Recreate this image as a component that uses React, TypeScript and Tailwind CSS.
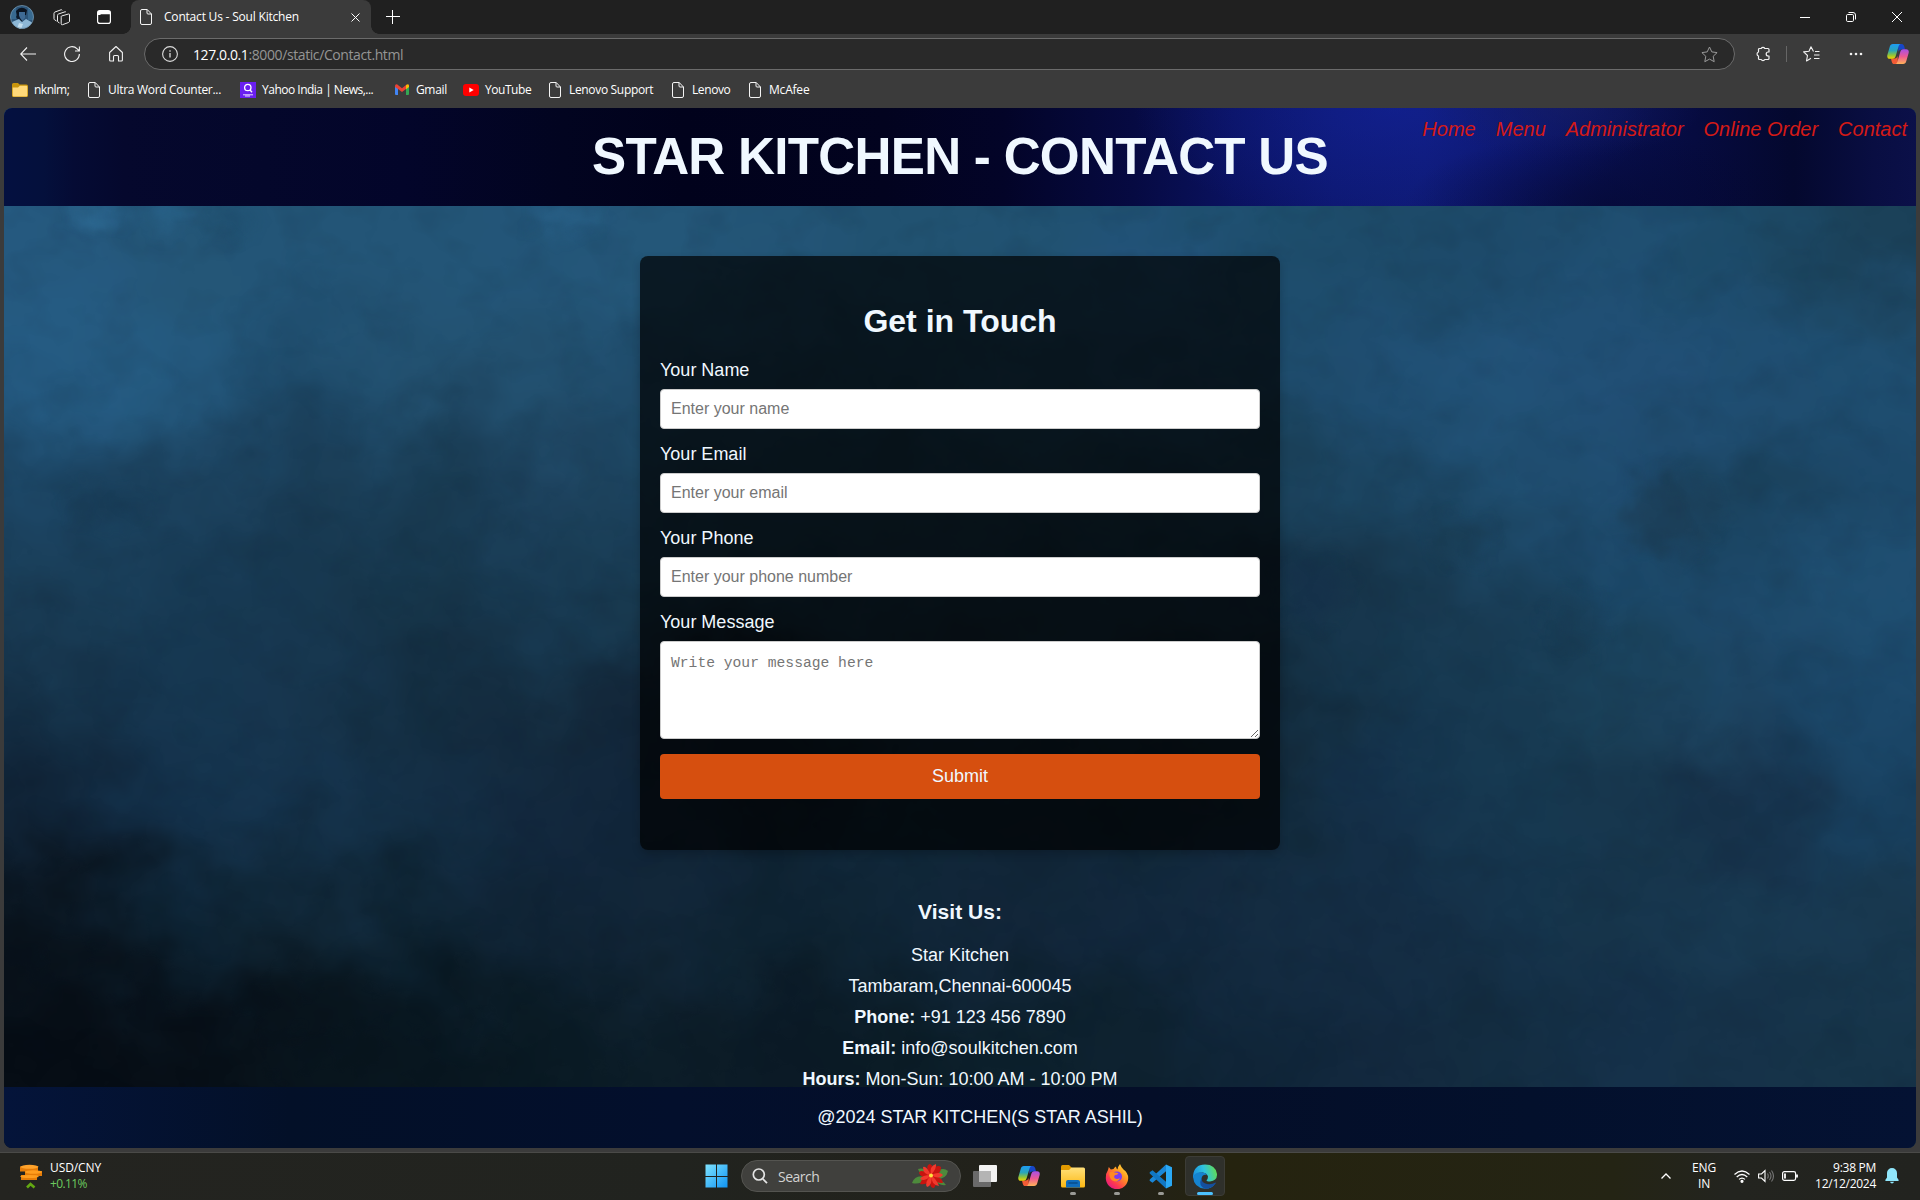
import type { ReactNode } from "react";

const ui = "font-['Open_Sans','Noto_Sans',sans-serif]";

function DocIcon() {
  return (
    <svg width="12" height="16" viewBox="0 0 12 16" fill="none" stroke="#f4f4f4" className="shrink-0">
      <path d="M2 .5h5.2L11.5 5v9a1.5 1.5 0 0 1-1.5 1.5H2A1.5 1.5 0 0 1 .5 14V2A1.500 1.500 0 0 1 2 .5ZM7 .5V4a1 1 0 0 0 1 1h3.500" />
    </svg>
  );
}

function Copilot({ size, id }: { size: number; id: string }) {
  return (
    <svg width={size} height={size} viewBox="0 0 24 24">
      <defs>
        <linearGradient id={id + "a"} x1="0" y1="0" x2="0" y2="1">
          <stop offset="0" stopColor="#1d9bf5" />
          <stop offset=".45" stopColor="#2aa6b8" />
          <stop offset=".75" stopColor="#8fc43a" />
          <stop offset="1" stopColor="#f7d400" />
        </linearGradient>
        <linearGradient id={id + "b"} x1="0" y1="0" x2="0" y2="1">
          <stop offset="0" stopColor="#a64fe8" />
          <stop offset=".5" stopColor="#ee5a92" />
          <stop offset="1" stopColor="#ffb357" />
        </linearGradient>
      </defs>
      <path d="M12 1h4c1.700 0 2.300 1 2.800 2.600L19.700 7h-4c-2 0-2.600 1-3.200 3z" fill="#1746c8" />
      <path d="M12 23H8c-1.700 0-2.300-1-2.800-2.600L4.300 17h4c2 0 2.600-1 3.200-3z" fill="#f25b35" />
      <path d="M6.500 1H15c-1.400.3-2 1.400-2.500 3.100L9.600 14c-.6 2-1.500 3.300-3.600 3.300H3.200C.8 17.300-.2 15.500.4 13.200L3 4C3.600 2 4.500 1 6.500 1Z" fill={`url(#${id}a)`} />
      <path d="M17.500 23H9c1.400-.3 2-1.400 2.500-3.100L14.400 10c.6-2 1.500-3.300 3.600-3.300h2.800c2.400 0 3.400 1.800 2.800 4.100L21 20c-.6 2-1.500 3-3.500 3Z" fill={`url(#${id}b)`} />
    </svg>
  );
}

function TitleBar() {
  return (
    <div className="flex h-[34px] items-center bg-[#202020]">
      <div className="flex w-[131px] items-center pl-[10px]">
        <svg width="24" height="24" viewBox="0 0 24 24">
          <defs>
            <clipPath id="av"><circle cx="12" cy="12" r="11.500" /></clipPath>
          </defs>
          <g clipPath="url(#av)">
            <rect width="24" height="24" fill="#2c5478" />
            <path d="M0 0h6v14H0zM18 3h6v12h-6z" fill="#386a90" />
            <path d="M6 6q5-6 11-1l-1 5-9 1z" fill="#0a1420" />
            <path d="M9 7h6v6l-3 3-3-4z" fill="#3f6b94" />
            <path d="M8 8l2 5 3 4-4-1-3-4z" fill="#0c1a2a" />
            <path d="M2 17l7-3 3 3 4-3 7 4v6H2z" fill="#8db7d6" />
            <path d="M9 18l4 1-2 5H7z" fill="#c2ddee" />
          </g>
          <circle cx="12" cy="12" r="11.500" fill="none" stroke="#7396ad" strokeWidth=".8" />
        </svg>
        <svg width="17" height="17" viewBox="0 0 17 17" fill="none" stroke="#ececec" strokeLinejoin="round" className="ml-[19px] shrink-0">
          <path d="M8.500 7 15.500 5a.8.8 0 0 1 1 .8v6.400a1.500 1.500 0 0 1-1 1.300l-6 2.200a1 1 0 0 1-1.300-.9V8.200A1.300 1.300 0 0 1 8.500 7Z" />
          <path d="M6.500 14 5 13a1.200 1.200 0 0 1-.5-1V6.500A1.500 1.500 0 0 1 5.500 5L12 2.800a1 1 0 0 1 1 .3M3.500 12 1.500 10.700A1.200 1.200 0 0 1 1 9.700V4.300A1.500 1.500 0 0 1 2 3L8 .8a1 1 0 0 1 1.200.5" />
        </svg>
        <svg width="14" height="14" viewBox="0 0 14 14" className="ml-[27px] shrink-0">
          <rect x=".6" y=".6" width="12.800" height="12.800" rx="2.200" fill="none" stroke="#fff" strokeWidth="1.200" />
          <path d="M1 1h12v3.200H1zM1 4h2.500v1H1z" fill="#fff" />
        </svg>
      </div>
      <div className="relative flex h-[34px] w-[240px] items-center rounded-t-[8px] bg-[#3b3b3b] pl-[9px]">
        <span className="absolute bottom-0 left-[-8px] size-[8px] bg-[radial-gradient(circle_at_0_0,#202020_7.500px,#3b3b3b_8px)]" />
        <span className="absolute bottom-0 right-[-8px] size-[8px] bg-[radial-gradient(circle_at_100%_0,#202020_7.500px,#3b3b3b_8px)]" />
        <DocIcon />
        <span className="ml-[12px] w-[187px] whitespace-nowrap text-[12px] tracking-[-0.2px] text-white">Contact Us - Soul Kitchen</span>
        <svg width="9" height="9" viewBox="0 0 9 9" stroke="#fff" className="shrink-0"><path d="m.5.5 8 8m0-8-8 8" /></svg>
      </div>
      <svg width="14" height="14" viewBox="0 0 14 14" stroke="#fff" className="ml-[15px]"><path d="M6.500 0v14M0 6.500h14" /></svg>
      <div className="ml-auto flex items-center pr-[18px]">
        <svg width="10" height="10" viewBox="0 0 10 10" stroke="#fff"><path d="M0 5.500h10" /></svg>
        <svg width="10" height="10" viewBox="0 0 10 10" fill="none" stroke="#fff" className="ml-[36px]">
          <rect x=".5" y="2.500" width="7" height="7" rx="1.200" /><path d="M2.500.5H7A2.500 2.500 0 0 1 9.500 3v4.500" />
        </svg>
        <svg width="10" height="10" viewBox="0 0 10 10" stroke="#fff" className="ml-[36px]"><path d="m0 0 10 10m0-10-10 10" /></svg>
      </div>
    </div>
  );
}

function Toolbar() {
  return (
    <div className="flex h-[40px] items-center bg-[#3b3b3b] pl-[20px]">
      <svg width="16" height="14" viewBox="0 0 16 14" fill="none" stroke="#f2f2f2" strokeWidth="1.100"><path d="M7 .5.700 7 7 13.500M.7 7H16" /></svg>
      <svg width="16" height="16" viewBox="0 0 16 16" fill="none" stroke="#f2f2f2" strokeWidth="1.100" className="ml-[28px]"><path d="M15.400 8a7.400 7.400 0 1 1-2.200-5.200L15.400 5M15.400 .5V5H11" /></svg>
      <svg width="14" height="16" viewBox="0 0 14 16" fill="none" stroke="#f2f2f2" strokeWidth="1.100" strokeLinejoin="round" className="ml-[29px]"><path d="m.6 6.500 6.400-6 6.400 6V14a1 1 0 0 1-1 1H9.500v-4.500a1 1 0 0 0-1-1h-3a1 1 0 0 0-1 1V15H1.600a1 1 0 0 1-1-1Z" /></svg>
      <div className="ml-[21px] flex h-[32px] w-[1591px] items-center rounded-full border border-[#6b6b6b] bg-[#292929] pl-[17px] pr-[16px]">
        <svg width="16" height="16" viewBox="0 0 16 16" fill="none" stroke="#dcdcdc" strokeWidth="1.100"><circle cx="8" cy="8" r="7.400" /><path d="M8 7v4.500M8 4.300v1.400" strokeWidth="1.300" /></svg>
        <span className="ml-[15px] whitespace-nowrap text-[14px] tracking-[-0.4px] text-[#959595]"><span className="text-white">127.0.0.1</span>:8000/static/Contact.html</span>
        <svg width="17" height="17" viewBox="0 0 17 17" fill="none" stroke="#9a9a9a" strokeLinejoin="round" className="ml-auto"><path d="m8.500 1 2.300 4.900 5.300.7-3.900 3.700 1 5.400-4.700-2.600-4.700 2.600 1-5.400L.9 6.600l5.300-.7Z" /></svg>
      </div>
      <svg width="16" height="16" viewBox="0 0 16 16" fill="none" stroke="#f2f2f2" strokeWidth="1.200" strokeLinejoin="round" className="ml-[20px]"><path d="M4.500 2.500h1.700a2 2 0 0 1 3.600 0H13a1 1 0 0 1 1 1V6h-.8a2 2 0 0 0 0 4h.8v2.500a1 1 0 0 1-1 1H9.800a2 2 0 0 1-3.600 0H4.500a1 1 0 0 1-1-1V10a2.100 2.100 0 0 1 0-4V3.500a1 1 0 0 1 1-1Z" /></svg>
      <div className="ml-[15px] h-[16px] w-px bg-[#666]" />
      <svg width="17" height="16" viewBox="0 0 17 16" fill="none" stroke="#f2f2f2" strokeWidth="1.100" strokeLinejoin="round" className="ml-[16px]"><path d="M12 5.500H16.500M11 9h5.500M11 12.500h5.500M10.500 5.500 8 .8 6 5.200l-5.400.7 3.900 3.600-1 5.400L8 12.300" /></svg>
      <svg width="14" height="4" viewBox="0 0 14 4" fill="#f2f2f2" className="ml-[29px]"><circle cx="2" cy="2" r="1.300" /><circle cx="7" cy="2" r="1.300" /><circle cx="12" cy="2" r="1.300" /></svg>
      <div className="ml-[24px] shrink-0"><Copilot size={22} id="ct" /></div>
    </div>
  );
}

function Bookmark({ icon, width, children }: { icon: ReactNode; width: string; children: ReactNode }) {
  return (
    <div className={"flex shrink-0 items-center whitespace-nowrap text-[12px] text-white " + width}>
      {icon}
      {children}
    </div>
  );
}

function Bookmarks() {
  return (
    <div className="flex h-[34px] items-center bg-[#3b3b3b] pb-[3px] pl-[12px]">
      <Bookmark width="w-[76px]" icon={<svg width="16" height="14" viewBox="0 0 16 14" className="shrink-0"><path d="M0 1.500A1.500 1.500 0 0 1 1.500 0H6l1.500 1.500h7A1.500 1.500 0 0 1 16 3v9.500a1.500 1.500 0 0 1-1.500 1.500h-13A1.500 1.500 0 0 1 0 12.500Z" fill="#c9950c" /><path d="M.7 4.500H6l1.800-1.700h6.500a1 1 0 0 1 1 1v8.600a1 1 0 0 1-1 1H1.700a1 1 0 0 1-1-1Z" fill="#ffd97a" /></svg>}>
        <span className="ml-[6px] tracking-[-0.5px]">nknlm;</span>
      </Bookmark>
      <Bookmark width="w-[152px]" icon={<DocIcon />}><span className="ml-[8px] tracking-[-0.3px]">Ultra Word Counter...</span></Bookmark>
      <Bookmark width="w-[155px]" icon={<svg width="16" height="16" viewBox="0 0 16 16" fill="none" className="shrink-0"><rect width="16" height="16" fill="#6a1ff0" /><circle cx="7.800" cy="5.500" r="3.200" stroke="#fff" strokeWidth="1.300" /><path d="m10 8 2 2.200" stroke="#fff" strokeWidth="1.300" /><path d="M3 12.800h10M5 14h5" stroke="#e8dcff" strokeWidth="1" /></svg>}>
        <span className="ml-[6px] tracking-[-0.5px]">Yahoo India | News,...</span>
      </Bookmark>
      <Bookmark width="w-[68px]" icon={<svg width="14" height="11" viewBox="0 0 14 11" className="shrink-0"><path d="M0 1.500 3 3.500V11H1a1 1 0 0 1-1-1Z" fill="#4285f4" /><path d="M14 1.500 11 3.500V11h2a1 1 0 0 0 1-1Z" fill="#34a853" /><path d="M0 2Q0 0 2 .3L7 4.300 12 .3 11 5 7 8 3 5 0 3Z" fill="#ea4335" /><path d="M11 1.200Q13.500-1 14 1.500V3l-3 2.200Z" fill="#fbbc04" /></svg>}>
        <span className="ml-[7px] tracking-[-0.35px]">Gmail</span>
      </Bookmark>
      <Bookmark width="w-[86px]" icon={<svg width="16" height="12" viewBox="0 0 16 12" className="shrink-0"><rect width="16" height="12" rx="3" fill="#f00" /><path d="m6.300 3.500 4.400 2.500-4.400 2.500Z" fill="#fff" /></svg>}>
        <span className="ml-[6px] tracking-[-0.45px]">YouTube</span>
      </Bookmark>
      <Bookmark width="w-[123px]" icon={<DocIcon />}><span className="ml-[8px] tracking-[-0.33px]">Lenovo Support</span></Bookmark>
      <Bookmark width="w-[77px]" icon={<DocIcon />}><span className="ml-[8px] tracking-[-0.4px]">Lenovo</span></Bookmark>
      <Bookmark width="w-[80px]" icon={<DocIcon />}><span className="ml-[8px] tracking-[-0.2px]">McAfee</span></Bookmark>
    </div>
  );
}

/* Cloud tones of the backdrop, one row per 110px and one colour per 120px. */
const tones = [
  "25597f 245677 235577 235577 235578 245779 225374 215070 205070 1f5070 1d4e6c 1d4a68 1d4a6a 1f4f72 1c4a68 1b4159",
  "25597f 245677 235577 235577 235578 245779 235577 215372 215372 22537a 1e4e6e 1d4a68 1d4a6a 1f4f72 1c4a68 1b4159",
  "255c84 245a80 1e4b6b 22506f 22506f 1f4c6c 1c4763 1c4966 1e4c6b 1e4a6a 1e4b6b 1f4e72 22537a 214f76 204f74 1f4f72",
  "1b4361 1c4360 1a3d57 193c54 1d425e 1c445f 1a4058 1a3f56 1b425a 1a4058 1a4058 1b4460 1f4e70 1f4c70 193f58 1c4869",
  "1a3e58 173a54 173850 163549 183b54 183a50 183a50 18384d 17364a 17364a 16344a 17364c 193d56 1b4868 1d4a6c 1f4f72",
  "142f45 163751 17364f 132c3f 142c3f 122436 10202e 142e40 142c3e 122838 122838 163850 173a52 1a4058 1c425f 1b4769",
  "102438 13304a 15344e 143047 12273d 11263a 0e2030 10283a 102636 102636 122a3b 14304a 163850 17374e 162f47 18405f",
  "09131c 0d2333 0f2433 0d2230 102436 12273a 0e2432 102638 12263a 12283e 142c42 142d44 15324a 16344a 183a53 18384f",
  "060d15 070f17 08131b 08161f 0a1b25 0c1d28 0b1a26 0b1c26 0c202c 0e2230 10263a 13293f 132c40 15314a 163249 163449",
  "060d15 070d15 08131b 08161f 0a1b25 0c1d28 0b1a26 0b1c26 0c202c 0e2230 10263a 13293f 132c40 15314a 163249 163449",
].map((row) => row.split(" "));

const accents: [number, number, number, number, string][] = [
  [96, 104, 26, 10, "#3375a3"],
  [165, 106, 22, 8, "#2c6a94"],
  [220, 112, 24, 12, "#1d4b6a"],
  [560, 112, 34, 10, "#2b658e"],
  [1666, 408, 42, 36, "#1c3d55"],
  [1455, 430, 28, 16, "#193c52"],
  [1575, 512, 24, 20, "#193d56"],
  [1310, 480, 30, 30, "#15304a"],
  [740, 550, 60, 30, "#0e1c2a"],
  [100, 400, 34, 12, "#173a54"],
];

function Backdrop() {
  return (
    <svg className="absolute inset-0" width="1912" height="1040" viewBox="0 0 1912 1040">
      <defs>
        <filter id="mist" filterUnits="userSpaceOnUse" x="-150" y="-150" width="2212" height="1340" colorInterpolationFilters="sRGB">
          <feGaussianBlur stdDeviation="38" result="b" />
          <feTurbulence type="fractalNoise" baseFrequency=".012 .014" numOctaves="5" seed="7" result="n" />
          <feDisplacementMap in="b" in2="n" scale="135" xChannelSelector="R" yChannelSelector="G" />
          <feGaussianBlur stdDeviation="2.500" />
        </filter>
        <filter id="wisp" x="-60%" y="-60%" width="220%" height="220%" colorInterpolationFilters="sRGB">
          <feGaussianBlur stdDeviation="9" result="b" />
          <feTurbulence type="fractalNoise" baseFrequency=".04" numOctaves="3" seed="3" result="n" />
          <feDisplacementMap in="b" in2="n" scale="36" xChannelSelector="R" yChannelSelector="G" />
          <feGaussianBlur stdDeviation="1.500" />
        </filter>
        <filter id="grain" x="0" y="0" width="100%" height="100%" colorInterpolationFilters="sRGB">
          <feTurbulence type="fractalNoise" baseFrequency=".022 .026" numOctaves="3" seed="21" />
          <feColorMatrix values="0 0 0 0 0.02  0 0 0 0 0.06  0 0 0 0 0.1  3 0 0 0 -1.400" />
        </filter>
      </defs>
      <g filter="url(#mist)">
        {tones.map((row, r) =>
          row.map((tone, c) => {
            const left = c === 0 ? -150 : c * 120 - 4;
            const right = c === 15 ? 2062 : c * 120 + 117;
            const top = r === 0 ? -150 : r * 110 - 12;
            const bottom = r === 9 ? 1190 : r * 110 + 99;
            return <rect key={`${r}-${c}`} x={left} y={top} width={right - left} height={bottom - top} fill={"#" + tone} />;
          }),
        )}
      </g>
      <g filter="url(#wisp)" opacity=".7">
        {accents.map(([x, y, rx, ry, fill], i) => (
          <ellipse key={i} cx={x} cy={y} rx={rx} ry={ry} fill={fill} />
        ))}
      </g>
      <rect width="1912" height="1040" filter="url(#grain)" opacity=".06" />
    </svg>
  );
}

function Field({ label, hint }: { label: string; hint: string }) {
  return (
    <div className="mb-[12px] flex h-[72px] flex-col justify-between">
      <label className="text-[18px] leading-[26px]">{label}</label>
      <input readOnly placeholder={hint} className="h-[40px] w-full rounded-[4px] border border-[#ccc] bg-white px-[10px] text-[16px] placeholder:text-[#757575]" />
    </div>
  );
}

function Page() {
  return (
    <div className="relative mx-[4px] h-[1040px] overflow-hidden rounded-[8px] font-['Liberation_Sans',Arial,sans-serif] text-[#f0f8ff]">
      <Backdrop />
      <header className="relative flex h-[98px] items-center justify-center bg-[radial-gradient(ellipse_200px_75px_at_1600px_98px,#04082e99,transparent),radial-gradient(ellipse_140px_50px_at_1560px_0px,#161e6699,transparent),radial-gradient(ellipse_260px_120px_at_1390px_0px,#1424a088,transparent),linear-gradient(90deg,#041040_0,#04103c_40px,#050b34_70px,#05082d_120px,#04072b_260px,#03052a_400px,#020420_560px,#01021c_680px,#02031f_880px,#030428_1000px,#060a42_1130px,#0a1260_1230px,#0d1870_1330px,#0e1a74_1420px,#0b1464_1510px,#080f50_1600px,#060b40_1690px,#04082e_1790px,#090e42_1870px,#0b1049_1912px)]">
        <h1 className="text-[51.200px] font-bold leading-none tracking-[-0.740px]">STAR KITCHEN - CONTACT US</h1>
        <nav className="absolute right-[9px] top-[9px] flex gap-[20px] text-[20px] italic leading-[24px] text-[#d41a16]">
          <a>Home</a><a>Menu</a><a>Administrator</a><a>Online Order</a><a>Contact</a>
        </nav>
      </header>
      <main className="relative flex flex-col items-center pt-[50px]">
        <form className="h-[594px] w-[640px] rounded-[8px] bg-black/70 px-[20px] pt-[47px] shadow-[0_4px_8px_rgba(0,0,0,0.2)]">
          <h2 className="text-center text-[32px] font-bold leading-[37px]">Get in Touch</h2>
          <div className="mt-[17px]">
            <Field label="Your Name" hint="Enter your name" />
            <Field label="Your Email" hint="Enter your email" />
            <Field label="Your Phone" hint="Enter your phone number" />
          </div>
          <label className="block h-[32px] text-[18px] leading-[26px]">Your Message</label>
          <textarea readOnly placeholder="Write your message here" className="block h-[98px] w-full rounded-[4px] border border-[#ccc] bg-white px-[10px] py-[11px] font-['Liberation_Mono',monospace] text-[14.660px] leading-[20px] placeholder:text-[#757575]" />
          <button className="mt-[15px] h-[45px] w-full rounded-[4px] bg-[#d64f0f] text-[18px]">Submit</button>
        </form>
        <section className="mt-[49px] text-center text-[18px] leading-[31px]">
          <h3 className="mb-[15px] text-[21.060px] font-bold leading-[26px]">Visit Us:</h3>
          <p>Star Kitchen</p>
          <p>Tambaram,Chennai-600045</p>
          <p><b>Phone:</b> +91 123 456 7890</p>
          <p><b>Email:</b> info@soulkitchen.com</p>
          <p><b>Hours:</b> Mon-Sun: 10:00 AM - 10:00 PM</p>
        </section>
      </main>
      <footer className="absolute inset-x-0 bottom-0 flex h-[61px] items-center justify-center bg-[linear-gradient(90deg,#04143a,#031028_15%,#030f2c_35%,#040e28_60%,#03102c_80%,#041233)] pl-[40px] text-[18px]">
        @2024 STAR KITCHEN(S STAR ASHIL)
      </footer>
    </div>
  );
}

function Poinsettia() {
  return (
    <svg width="36" height="24" viewBox="0 0 36 24">
      <g fill="#4d8a3c">
        <path d="M14 13Q3 10 0 19q8 2 14-4Z" /><path d="M22 10Q30 2 36 7q-2 9-13 8Z" /><path d="M6 5q6-2 11 5l-3 2Q8 11 6 5Z" /><path d="M22 15q8 0 12 6-7 1-12-5Z" />
      </g>
      <g fill="#c8140f">
        <path d="M19 11Q8 4 7 9q3 7 12 2Z" /><path d="M19 11Q9 14 8 20q9 2 11-9Z" /><path d="M19 11Q16 24 22 24q5-5-3-13Z" /><path d="M19 11q12 2 12 8-9 1-12-8Z" /><path d="M19 11q4-12 10-8 0 9-10 8Z" /><path d="M19 11Q12 2 18 0q6 3 1 11Z" />
      </g>
      <g fill="#f2382c">
        <path d="M19 11Q14 1 11 3q0 8 8 8Z" /><path d="M19 11q9-4 12 0-4 5-12 0Z" /><path d="M19 11q-7 8-4 12 6-2 4-12Z" /><path d="M19 11q6-7 5-11-7 2-5 11Z" /><path d="M19 11q6 5 8 11-8-1-8-11Z" /><path d="M19 11q-9 0-11 4 6 3 11-4Z" />
      </g>
      <circle cx="19" cy="11.500" r="2" fill="#ffe23c" />
    </svg>
  );
}

function TaskItem({ children, active, dot }: { children: ReactNode; active?: boolean; dot?: boolean }) {
  return (
    <div className={"relative flex h-[40px] w-[40px] shrink-0 items-center justify-center " + (active ? "rounded-[4px] border border-[#3c3c36] bg-[#2f302b]" : "")}>
      {children}
      {dot && <span className="absolute bottom-[1px] h-[3px] w-[6px] rounded-full bg-[#9a9a96]" />}
      {active && <span className="absolute bottom-0 h-[3px] w-[16px] rounded-full bg-[#4cc2ff]" />}
    </div>
  );
}

function Taskbar() {
  return (
    <div className={"flex h-[48px] items-center bg-[linear-gradient(90deg,#242420,#21231f_35%,#222119_58%,#25230f_64%,#242414_84%,#23241f_90%,#22231f)] shadow-[inset_0_1px_0_#4a4a48] text-white " + ui}>
      <div className="flex w-[700px] items-center pl-[20px]">
        <svg width="22" height="25" viewBox="0 0 22 25">
          <path d="M0 2.500h18v5H0zM5 7h17v5H5zM1 11h16v5H1z" fill="#e57c08" />
          <ellipse cx="9.500" cy="2.800" rx="9" ry="2" fill="#ffa32b" />
          <ellipse cx="13.500" cy="8" rx="8.500" ry="1.800" fill="#ff9d1e" />
          <ellipse cx="9.500" cy="12.500" rx="9.300" ry="1.600" fill="#ff9d1e" />
          <path d="m7 23.500 3.500-3.500 4 3.500" fill="none" stroke="#63a812" strokeWidth="2.600" />
        </svg>
        <div className="ml-[8px] text-[12px] leading-[16px]">
          <div className="tracking-[-0.1px]">USD/CNY</div>
          <div className="tracking-[-0.6px] text-[#6ccb5f]">+0.11%</div>
        </div>
      </div>
      <svg width="24" height="24" viewBox="0 0 24 24" className="ml-[4px]">
        <defs><linearGradient id="win" x1="0" y1="0" x2="1" y2="1"><stop stopColor="#7fe3ff" /><stop offset="1" stopColor="#0f93f2" /></linearGradient></defs>
        <path d="M1.500.5H12V12H1.500zM13 .5h10.500V12H13zM1.500 13H12v10.500H1.500zM13 13h10.500v10.500H13z" fill="url(#win)" />
      </svg>
      <div className="ml-[13px] flex h-[32px] w-[220px] items-center rounded-full border border-[#545450] bg-[#40403d] pl-[10px] pr-[12px]">
        <svg width="16" height="16" viewBox="0 0 16 16" fill="none" stroke="#e4e4e4" strokeWidth="1.700"><circle cx="6.800" cy="6.500" r="5.500" /><path d="m10.800 10.800 4.200 4.400" /></svg>
        <span className="ml-[10px] text-[14px] tracking-[-0.5px] text-[#d2d2d2]">Search</span>
        <div className="ml-auto"><Poinsettia /></div>
      </div>
      <div className="ml-[4px] flex gap-[4px]">
        <TaskItem><svg width="24" height="24" viewBox="0 0 24 24"><rect x="6" y="1" width="18" height="17" rx="1" fill="#f3f3f3" /><rect x="0" y="7" width="18" height="16" rx="1" fill="#6a6a6a" /><path d="M6 7h12v11H6z" fill="#b4b4b4" /></svg></TaskItem>
        <TaskItem><Copilot size={22} id="cb" /></TaskItem>
        <TaskItem dot>
          <svg width="24" height="23" viewBox="0 0 24 23"><defs><linearGradient id="fo" x1="0" y1="0" x2="0" y2="1"><stop stopColor="#ffe07a" /><stop offset="1" stopColor="#fcb813" /></linearGradient></defs><path d="M0 1.500Q0 0 1.500 0H8l2.500 2.500v3H0Z" fill="#e29a00" /><path d="M0 5h8l2.500-2.500h12Q24 2.500 24 4v17q0 1.500-1.500 1.500h-21Q0 22.500 0 21Z" fill="url(#fo)" /><path d="M5 22.500V17q0-2 2-2h10q2 0 2 2v5.500Z" fill="#0f6cbd" /><path d="M8 18h8" stroke="#084c8c" strokeWidth="1.600" strokeLinecap="round" /></svg>
        </TaskItem>
        <TaskItem dot>
          <svg width="24" height="25" viewBox="0 0 24 25"><defs><linearGradient id="ff" x1="1" y1="0" x2=".2" y2="1"><stop stopColor="#fff04a" /><stop offset=".4" stopColor="#ff9a1f" /><stop offset=".75" stopColor="#ff3b4e" /><stop offset="1" stopColor="#e31587" /></linearGradient></defs><path d="M15 0q1 3 3.500 5.500 4.700 3.500 4.700 8.500a11.200 11.200 0 0 1-22.400 0Q.8 9 3 6l.8-3 2 2.500 2.700-.5q1-2 2.500-2.500 0 2 1.500 3Q12.500 3 15 0Z" fill="url(#ff)" /><circle cx="12" cy="12.500" r="5" fill="#7a3df0" /><path d="M4.500 8.500q3-1.500 5 0 3 0 4 1-1.500 1.500-3.500 1.500-1.500 1.500-.5 3 2.500 2 5.500 0-.5 2.500-3.500 3.500-5 0-6.500-4Q4 11 4.500 8.500Z" fill="#ff8a24" /></svg>
        </TaskItem>
        <TaskItem dot>
          <svg width="24" height="25" viewBox="0 0 24 25"><path d="M17 .5 23 3.300V21.700L17 24.500Z" fill="#2aa9f5" /><path d="M17 .5v6.700L3.500 18.800 1 17q-1-.9 0-1.800Z" fill="#1a87d8" /><path d="M17 24.500v-6.700L3.500 6.200 1 8q-1 .9 0 1.800Z" fill="#1177c4" /></svg>
        </TaskItem>
        <TaskItem active>
          <svg width="24" height="25" viewBox="0 0 24 25"><defs><linearGradient id="ed" x1="0" y1=".6" x2="1" y2=".4"><stop stopColor="#1b8fe0" /><stop offset=".5" stopColor="#2fc3df" /><stop offset="1" stopColor="#62dc52" /></linearGradient></defs><path d="M0 12Q1 .5 12 .5 22.500.5 24 10q.3 7-7 7.500-3.500 0-3.500-1.300Q15 15 15 12.500 14 9 9.500 8.500 3 8.500 0 14Z" fill="url(#ed)" /><path d="M0 13Q2 8 8.500 8.300 12.500 8.600 14 11 9 10 8.500 15 9 21 15 22.500 19 23 22 20 18.500 25 12 24.700 1 24 0 13Z" fill="#1583d0" /><path d="M8.300 14.500Q9 19 14 20q5 .6 8.500-1.500.6.500 0 1.300-4 5-10.500 5-7-3-3.700-10.300Z" fill="#154f9e" /></svg>
        </TaskItem>
      </div>
      <svg width="10" height="6" viewBox="0 0 10 6" fill="none" stroke="#fff" strokeWidth="1.300" className="ml-[436px]"><path d="m.5 5.500 4.500-4.500 4.500 4.500" /></svg>
      <div className="ml-[19px] w-[28px] text-center text-[12px] leading-[16px] tracking-[-0.2px]">ENG<br />IN</div>
      <svg width="16" height="13" viewBox="0 0 16 13" fill="none" stroke="#fff" strokeWidth="1.200" className="ml-[16px]"><path d="M.5 4.500q7.500-7 15 0M2.700 7q5.300-5 10.600 0M5 9.400q3-2.700 6 0" /><circle cx="8" cy="11.300" r="1" fill="#fff" /></svg>
      <svg width="17" height="14" viewBox="0 0 17 14" fill="none" stroke="#fff" strokeWidth="1.100" className="ml-[8px]"><path d="M.6 5h2.900L7 1.500v11L3.500 9H.6Z" /><path d="M9.500 4.500q1.500 2.500 0 5M11.500 3q3 4 0 8M13.500 1.500q4 5.500 0 11" stroke="#777" /></svg>
      <svg width="16" height="10" viewBox="0 0 16 10" fill="none" stroke="#fff" strokeWidth="1.200" className="ml-[7px]"><rect x=".6" y=".6" width="13" height="8.800" rx="1.800" /><path d="M3 2.500v5M15 3.500v3" strokeWidth="1.800" /></svg>
      <div className="ml-auto mr-[9px] text-right text-[12px] leading-[16px] tracking-[-0.28px]">
        <div>9:38 PM</div><div>12/12/2024</div>
      </div>
      <svg width="14" height="16" viewBox="0 0 14 16" fill="#90e6fb" className="mr-[21px]"><path d="M7 0a5 5 0 0 1 5 5v4.500l1.700 2.500q.3 1-.7 1H1q-1 0-.7-1L2 9.500V5a5 5 0 0 1 5-5ZM5 13.800h4q-.5 1.700-2 1.700t-2-1.700Z" /></svg>
    </div>
  );
}

export default function App() {
  return (
    <div className="h-[1200px] w-[1920px] overflow-hidden bg-[#3b3b3b]">
      <div className={ui}>
        <TitleBar />
        <Toolbar />
        <Bookmarks />
      </div>
      <Page />
      <div className="h-[4px] bg-[#3b3b3b]" />
      <Taskbar />
    </div>
  );
}
